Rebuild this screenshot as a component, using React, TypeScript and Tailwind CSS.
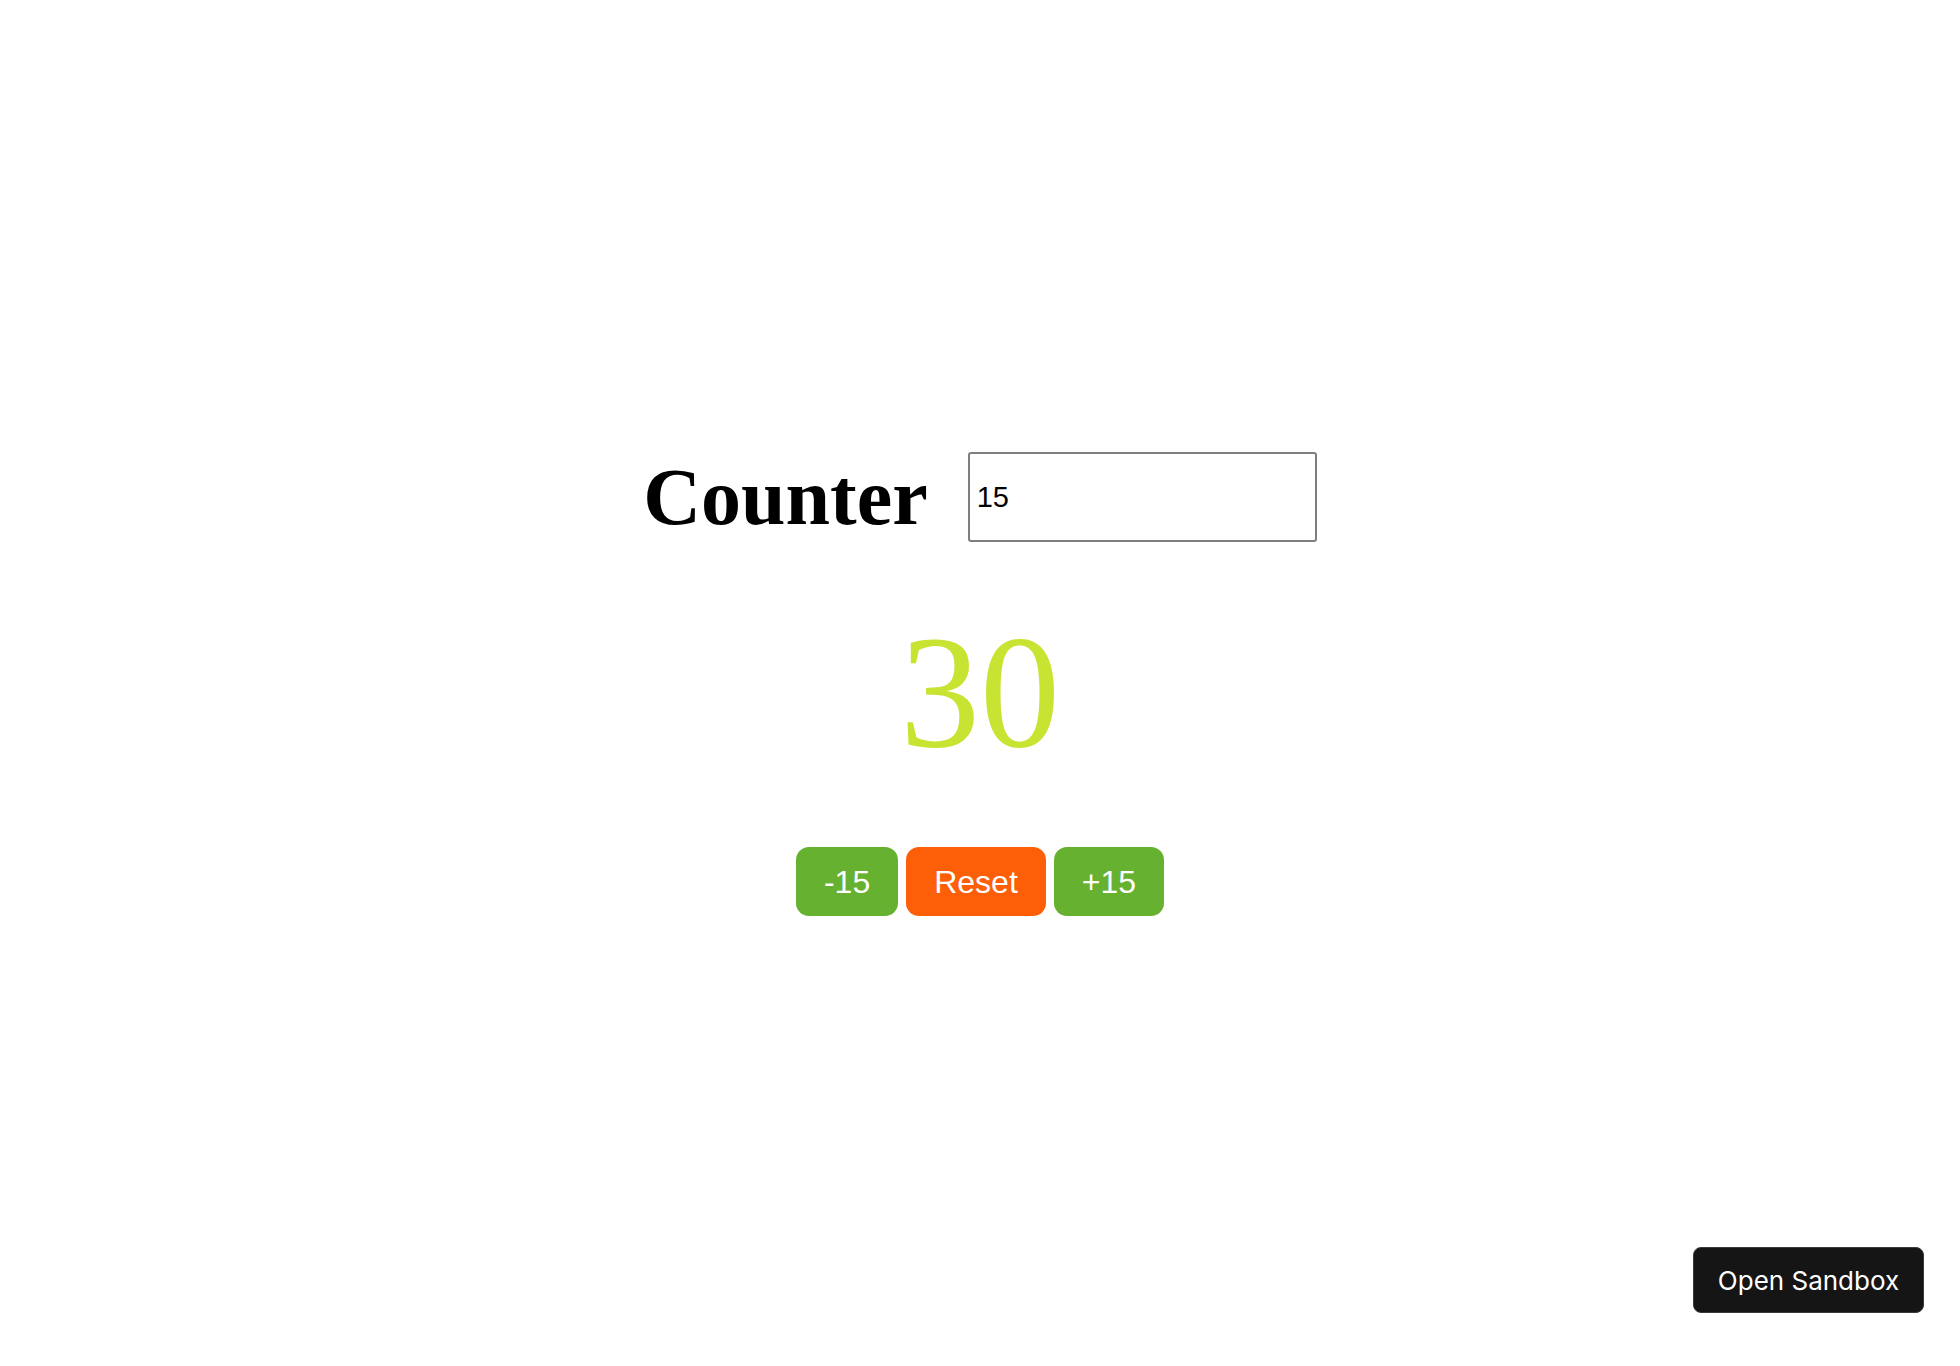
import { useState } from "react";

export default function App() {
  const [step, setStep] = useState("15");
  const [count, setCount] = useState(30);
  const n = Number(step) || 0;

  return (
    <div className="relative min-h-screen w-full bg-white">
      <div className="flex flex-col items-center pt-[452px]">
        {/* Header row */}
        <div className="flex items-center gap-10">
          <h1 className="whitespace-nowrap font-['Liberation_Serif',serif] text-[80px] font-bold leading-none text-black">
            Counter
          </h1>
          <input
            type="text"
            value={step}
            onChange={(e) => setStep(e.target.value)}
            className="h-[90px] w-[349px] rounded-[3px] border-2 border-[#7f7f7f] bg-white pl-[7px] font-['Liberation_Sans',Arial,sans-serif] text-[29px] text-black outline-none"
          />
        </div>

        {/* Count */}
        <div className="mt-[70px] font-['Liberation_Serif',serif] text-[160px] leading-none text-[#c9e333]">
          {count}
        </div>

        {/* Controls */}
        <div className="mt-[75px] flex gap-2 font-['Liberation_Sans',Arial,sans-serif] text-[32px] text-white">
          <button
            onClick={() => setCount((c) => c - n)}
            className="h-[69px] rounded-[13px] bg-[#67b131] px-[28px]"
          >
            -{step}
          </button>
          <button
            onClick={() => setCount(0)}
            className="h-[69px] rounded-[13px] bg-[#fd5e08] px-[28px]"
          >
            Reset
          </button>
          <button
            onClick={() => setCount((c) => c + n)}
            className="h-[69px] rounded-[13px] bg-[#67b131] px-[28px]"
          >
            +{step}
          </button>
        </div>
      </div>

      {/* Sandbox link overlay */}
      <button className="absolute bottom-[53px] right-[36px] flex h-[66px] w-[231px] items-center justify-center rounded-[8px] border border-[#3a3a3a] bg-[#151515] font-['Inter',sans-serif] text-[26px] text-white">
        Open Sandbox
      </button>
    </div>
  );
}
